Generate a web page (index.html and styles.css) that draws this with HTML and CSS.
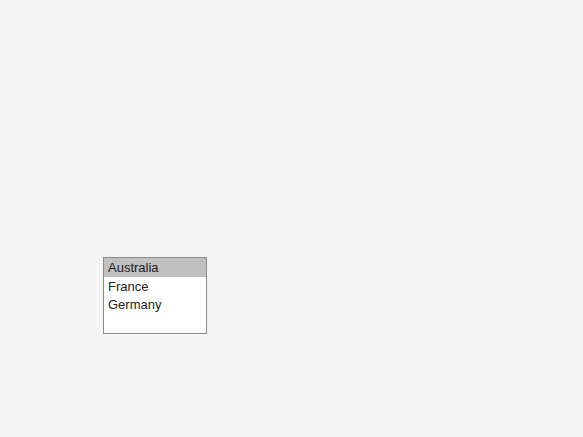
FILE: index.html
```html
<!DOCTYPE html>
<html>
<head>
<meta charset="utf-8">
<link rel="stylesheet" href="styles.css">
</head>
<body>
<div class="page">
  <div class="listbox">
    <div class="option selected">Australia</div>
    <div class="option">France</div>
    <div class="option">Germany</div>
  </div>
</div>
</body>
</html>
```
FILE: styles.css
```css
html, body {
  margin: 0;
  padding: 0;
  background: #f5f5f5;
}
.page {
  padding: 257px 0 0 103px;
  font-family: "Liberation Sans", Arial, sans-serif;
}
.listbox {
  width: 102px;
  height: 75px;
  border: 1px solid #8a8a8a;
  background: #ffffff;
  display: flex;
  flex-direction: column;
}
.option {
  font-size: 13px;
  line-height: 17.5px;
  padding: 1px 4px 0;
  color: #222222;
}
.option.selected {
  background: #c0c0c0;
}
```
